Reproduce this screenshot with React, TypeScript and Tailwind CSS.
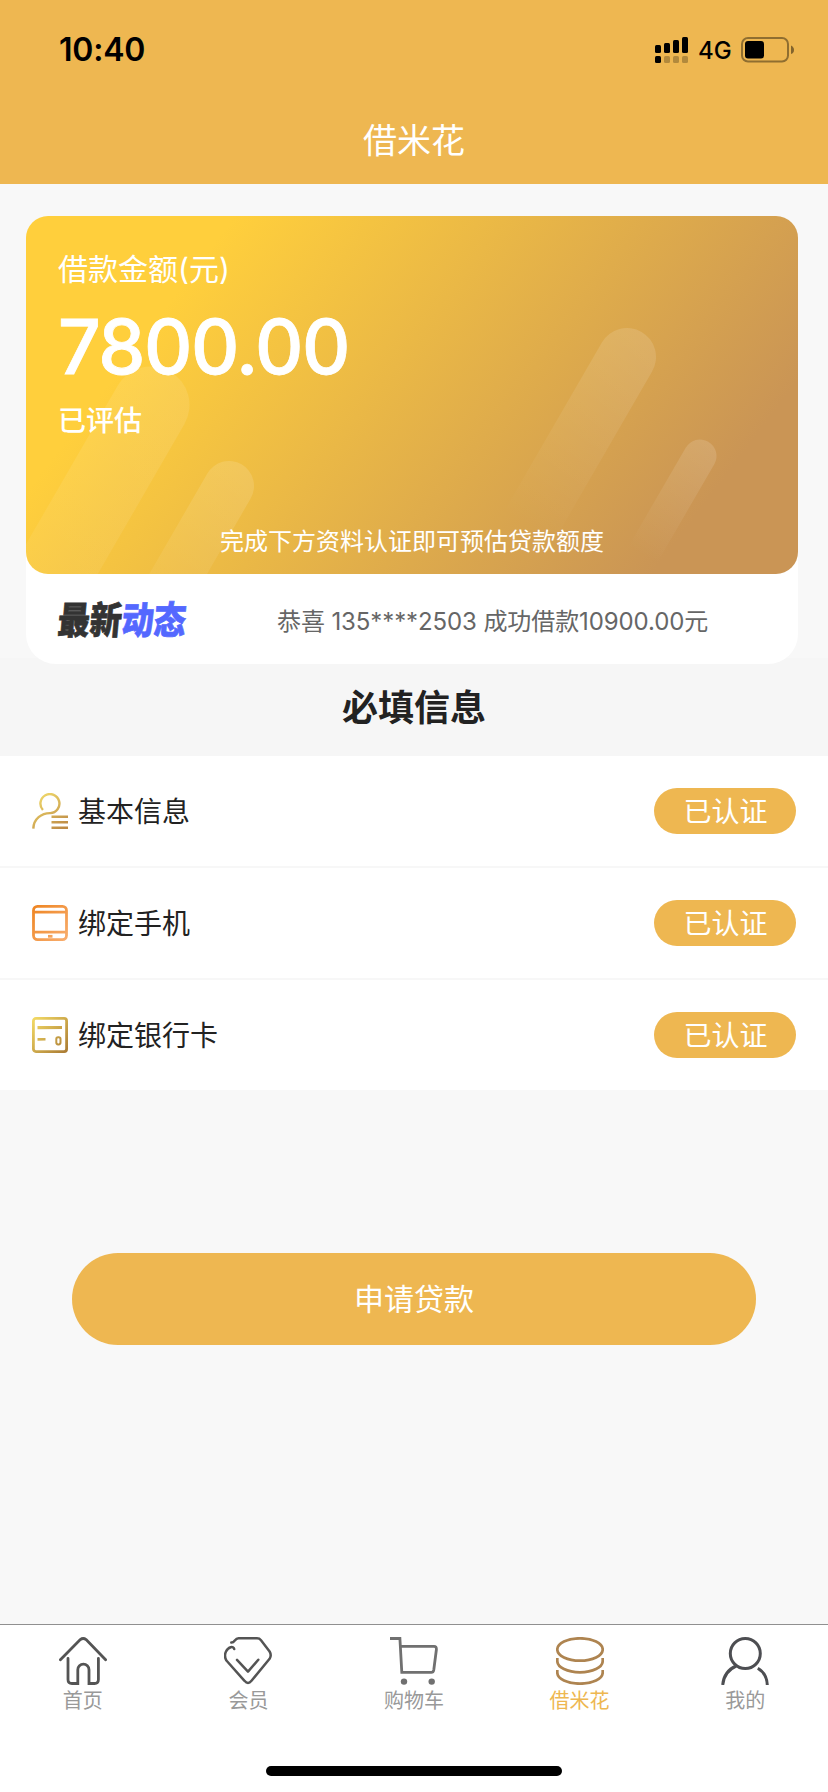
import React from 'react';

interface InfoRow {
  label: string;
  status: string;
  icon: React.ReactNode;
}

interface Tab {
  label: string;
  active?: boolean;
  icon: React.ReactNode;
}

const UserIcon = () => (
  <svg width="36" height="36" viewBox="0 0 36 36" fill="none">
    <defs>
      <linearGradient id="user-gold" x1="6" y1="0" x2="30" y2="36" gradientUnits="userSpaceOnUse">
        <stop offset="0" stopColor="#f2dc6c" />
        <stop offset="1" stopColor="#bd8a45" />
      </linearGradient>
    </defs>
    <g stroke="url(#user-gold)" strokeWidth="2.400">
      <path d="M10.900 17A9.500 9.500 0 1 1 18.200 20.100C9.500 20 1.600 26 1.300 35.600" />
      <path d="M19.500 23.800H36M19.500 29.200H36M19.500 34.700H36" />
    </g>
  </svg>
);

const PhoneIcon = () => (
  <svg width="36" height="36" viewBox="0 0 36 36" fill="none">
    <defs>
      <linearGradient id="phone-orange" x1="0" y1="0" x2="36" y2="36" gradientUnits="userSpaceOnUse">
        <stop offset="0" stopColor="#ee8420" />
        <stop offset="1" stopColor="#f8ae70" />
      </linearGradient>
    </defs>
    <g stroke="url(#phone-orange)" strokeWidth="2.800">
      <rect x="1.500" y="1.400" width="33" height="33.200" rx="4" />
      <path d="M2 7.200H34M2 27.200H34" />
      <path d="M16 31.300H20.500" />
    </g>
  </svg>
);

const CardIcon = () => (
  <svg width="36" height="36" viewBox="0 0 36 36" fill="none">
    <defs>
      <linearGradient id="card-gold" x1="0" y1="0" x2="36" y2="36" gradientUnits="userSpaceOnUse">
        <stop offset="0" stopColor="#f5dd66" />
        <stop offset="1" stopColor="#a87832" />
      </linearGradient>
    </defs>
    <g stroke="url(#card-gold)">
      <rect x="1.400" y="1.400" width="33.200" height="33.200" rx="2.500" strokeWidth="2.800" />
      <path d="M5.500 10.600L30 10.500" strokeWidth="3.200" />
      <path d="M5.500 22.400L13.500 22.300" strokeWidth="2.600" />
      <rect x="24.300" y="20.200" width="4.200" height="7.200" rx="1.800" strokeWidth="2" />
    </g>
  </svg>
);

const HomeIcon = () => (
  <svg width="48" height="48" viewBox="0 0 48 48" fill="none" stroke="#545454" strokeWidth="2.800" strokeLinecap="round">
    <path d="M1.400 22.800L21.300 2.600Q24.200 0.300 27.100 2.600L46.600 22.800" />
    <path d="M9 21.500V42.500Q9 46.500 13 46.500H18.800V32.800A5.600 5.600 0 0 1 30 32.800V46.500H35.500Q39.400 46.500 39.400 42.500V21.500" />
  </svg>
);

const MemberIcon = () => (
  <svg width="48" height="48" viewBox="0 0 48 48" fill="none" stroke="#545454" strokeWidth="2.500" strokeLinecap="round" strokeLinejoin="round">
    <path d="M7.300 5.600C11 6 10.500 1.300 14.500 1.300H33Q35.500 1.300 37 3.200L45.600 14.500Q47.800 18.300 45.600 21.800L27.500 43.800Q24 48 20.500 43.800L2.400 23.500Q-0.200 19 2 14.500C4.500 9.500 9.500 8.900 10.200 12" />
    <path d="M13 22.800L24 34.600L34.300 22.800" />
  </svg>
);

const CartIcon = () => (
  <svg width="48" height="48" viewBox="0 0 48 48" fill="none" stroke="#707070" strokeWidth="2.800">
    <path d="M0 1.500H9.900L11.800 35.400H41.300Q43.300 35.400 43.800 32.700L46.400 12.500Q46.600 9.300 44 9.300H10.600" />
    <circle cx="14" cy="44.600" r="3.200" fill="#707070" stroke="none" />
    <circle cx="41.700" cy="44.600" r="3.200" fill="#707070" stroke="none" />
  </svg>
);

const CoinsIcon = () => (
  <svg width="48" height="48" viewBox="0 0 48 48" fill="none" stroke="#ae8450" strokeWidth="2.700">
    <ellipse cx="24" cy="12.500" rx="22.700" ry="11.200" />
    <path d="M1.300 21V24C1.300 30.500 11.500 35.300 24 35.300S46.700 30.500 46.700 24V21" />
    <path d="M1.300 33V35.500C1.300 42 11.500 46.700 24 46.700S46.700 42 46.700 35.500V33" />
  </svg>
);

const MineIcon = () => (
  <svg width="48" height="48" viewBox="0 0 48 48" fill="none" stroke="#4d4e52" strokeWidth="3">
    <circle cx="24.300" cy="16.500" r="15" />
    <path d="M1.700 48C2.500 39 7 32.500 15.200 29" />
    <path d="M36.800 31.300C42.300 34.500 46 40 46.300 48" />
  </svg>
);

const rows: InfoRow[] = [
  { label: '基本信息', status: '已认证', icon: <UserIcon /> },
  { label: '绑定手机', status: '已认证', icon: <PhoneIcon /> },
  { label: '绑定银行卡', status: '已认证', icon: <CardIcon /> },
];

const tabs: Tab[] = [
  { label: '首页', icon: <HomeIcon /> },
  { label: '会员', icon: <MemberIcon /> },
  { label: '购物车', icon: <CartIcon /> },
  { label: '借米花', icon: <CoinsIcon />, active: true },
  { label: '我的', icon: <MineIcon /> },
];

const StatusBar = () => (
  <div className="flex h-[100px] items-center justify-between pl-[59px] pr-[34px] text-black">
    <span className="text-[32px] font-semibold leading-none tracking-[-0.2px]">10:40</span>
    <div className="flex items-center">
      <svg width="33" height="28" viewBox="0 0 33 28">
        <rect x="0" y="9" width="6" height="8" rx="1.500" />
        <rect x="9" y="7" width="6" height="10" rx="1.500" />
        <rect x="18" y="4" width="6" height="13" rx="1.500" />
        <rect x="27" y="1" width="6" height="16" rx="1.500" />
        <rect x="0" y="20" width="6" height="7" rx="1.500" />
        <g fillOpacity="0.250">
          <rect x="9" y="20" width="6" height="7" rx="1.500" />
          <rect x="18" y="20" width="6" height="7" rx="1.500" />
          <rect x="27" y="20" width="6" height="7" rx="1.500" />
        </g>
      </svg>
      <span className="ml-[10px] w-[43px] pt-[2px] text-[24px] font-medium leading-none">4G</span>
      <svg width="53" height="26" viewBox="0 0 53 26">
        <rect x="1" y="1" width="46" height="23.500" rx="6" fill="none" stroke="#000" strokeOpacity="0.400" strokeWidth="2" />
        <rect x="4" y="4" width="19" height="17.500" rx="3" />
        <path d="M50 8.500Q53 10 53 13T50 17Z" fillOpacity="0.450" />
      </svg>
    </div>
  </div>
);

// Diagonal light streaks over the amount card
const CardStreaks = () => (
  <svg className="absolute inset-0" width="772" height="358" viewBox="0 0 772 358" fill="none" strokeLinecap="round">
    <defs>
      <linearGradient id="streak-a" x1="145" y1="153" x2="40" y2="356" gradientUnits="userSpaceOnUse">
        <stop offset="0" stopColor="#fff" stopOpacity="0.100" />
        <stop offset="1" stopColor="#fff" stopOpacity="0.060" />
      </linearGradient>
      <linearGradient id="streak-b" x1="203" y1="245" x2="150" y2="358" gradientUnits="userSpaceOnUse">
        <stop offset="0" stopColor="#fff" stopOpacity="0.130" />
        <stop offset="1" stopColor="#fff" stopOpacity="0.060" />
      </linearGradient>
      <linearGradient id="streak-c" x1="615" y1="115" x2="502" y2="312" gradientUnits="userSpaceOnUse">
        <stop offset="0" stopColor="#fff" stopOpacity="0.130" />
        <stop offset="1" stopColor="#fff" stopOpacity="0" />
      </linearGradient>
      <linearGradient id="streak-d" x1="682" y1="225" x2="616" y2="340" gradientUnits="userSpaceOnUse">
        <stop offset="0" stopColor="#fff" stopOpacity="0.140" />
        <stop offset="1" stopColor="#fff" stopOpacity="0" />
      </linearGradient>
    </defs>
    <path d="M125 189L-75 535" stroke="url(#streak-a)" strokeWidth="77" />
    <path d="M203 270L103 443" stroke="url(#streak-b)" strokeWidth="50" />
    <path d="M601 141L461 383" stroke="url(#streak-c)" strokeWidth="58" />
    <path d="M674 240L594 378" stroke="url(#streak-d)" strokeWidth="33" />
  </svg>
);

const AmountCard = () => (
  <div className="relative z-10 ml-[26px] h-[448px] w-[772px] rounded-[30px] bg-white">
    <div className="relative flex h-[358px] flex-col overflow-hidden rounded-[22px] bg-[linear-gradient(127deg,#ffcf3c_20%,#ca9555_86%)] px-8 text-white">
      <CardStreaks />
      <div className="relative mt-[33px] text-[30px] leading-[40px]">借款金额(元)</div>
      <div className="relative mt-[18px] text-[75px] font-medium leading-[80px] tracking-[-1.5px] [-webkit-text-stroke:0.8px_currentColor]">7800.00</div>
      <div className="relative mt-[14px] text-[28px] font-medium leading-[40px]">已评估</div>
      <div className="relative mt-[86px] text-center text-[24px] leading-[30px]">完成下方资料认证即可预估贷款额度</div>
    </div>
    <div className="flex h-[90px] items-center pl-8">
      <div className="mt-[4px] flex w-[128px] -skew-x-6 scale-y-[1.18] text-[32px] font-black leading-[38px] text-[#333] [-webkit-text-stroke:0.6px_currentColor]">
        <span>最新</span>
        <span className="text-[#5468ff]">动态</span>
      </div>
      <div className="ml-[91px] whitespace-nowrap pt-[6px] text-[24px] leading-[30px] tracking-[-0.1px] text-[#666]">
        恭喜 135****2503 成功借款10900.00元
      </div>
    </div>
  </div>
);

export default function App() {
  return (
    <div className="flex h-[1792px] w-[828px] flex-col overflow-hidden bg-[#f8f8f8] font-[Inter,'Noto_Sans_CJK_SC',sans-serif]">
      {/* Header */}
      <header className="h-[184px] bg-[#eeb751]">
        <StatusBar />
        <h1 className="text-center text-[34px] leading-[82px] text-white">借米花</h1>
      </header>

      {/* Amount */}
      <section className="h-[474px] pt-8">
        <AmountCard />
      </section>

      {/* Required info */}
      <h2 className="h-[98px] bg-[#f6f6f6] text-center text-[36px] font-bold leading-[100px] text-[#222]">必填信息</h2>
      <ul className="divide-y-2 divide-[#f7f7f7] bg-white">
        {rows.map((row) => (
          <li key={row.label} className="box-content flex h-[110px] items-center pl-8">
            {row.icon}
            <span className="ml-[10px] pt-[2px] text-[28px] text-[#222]">{row.label}</span>
            <span className="ml-auto mr-8 flex h-[46px] w-[142px] items-center justify-center rounded-full bg-[#eeb751] pl-px pt-px text-[28px] leading-none text-white">
              {row.status}
            </span>
          </li>
        ))}
      </ul>

      <button className="mx-[72px] mt-[163px] h-[92px] rounded-full bg-[#eeb751] text-[30px] text-white">申请贷款</button>

      {/* Tab bar */}
      <nav className="mt-auto h-[168px] border-t border-[#909090] bg-white">
        <div className="grid h-[141px] grid-cols-5">
          {tabs.map((tab) => (
            <div key={tab.label} className="flex flex-col items-center pt-3">
              {tab.icon}
              <span className={tab.active ? 'text-[20px] leading-[32px] text-[#eeb751]' : 'text-[20px] leading-[32px] text-[#999]'}>
                {tab.label}
              </span>
            </div>
          ))}
        </div>
        <div className="mx-auto h-[10px] w-[296px] rounded-full bg-black" />
      </nav>
    </div>
  );
}
